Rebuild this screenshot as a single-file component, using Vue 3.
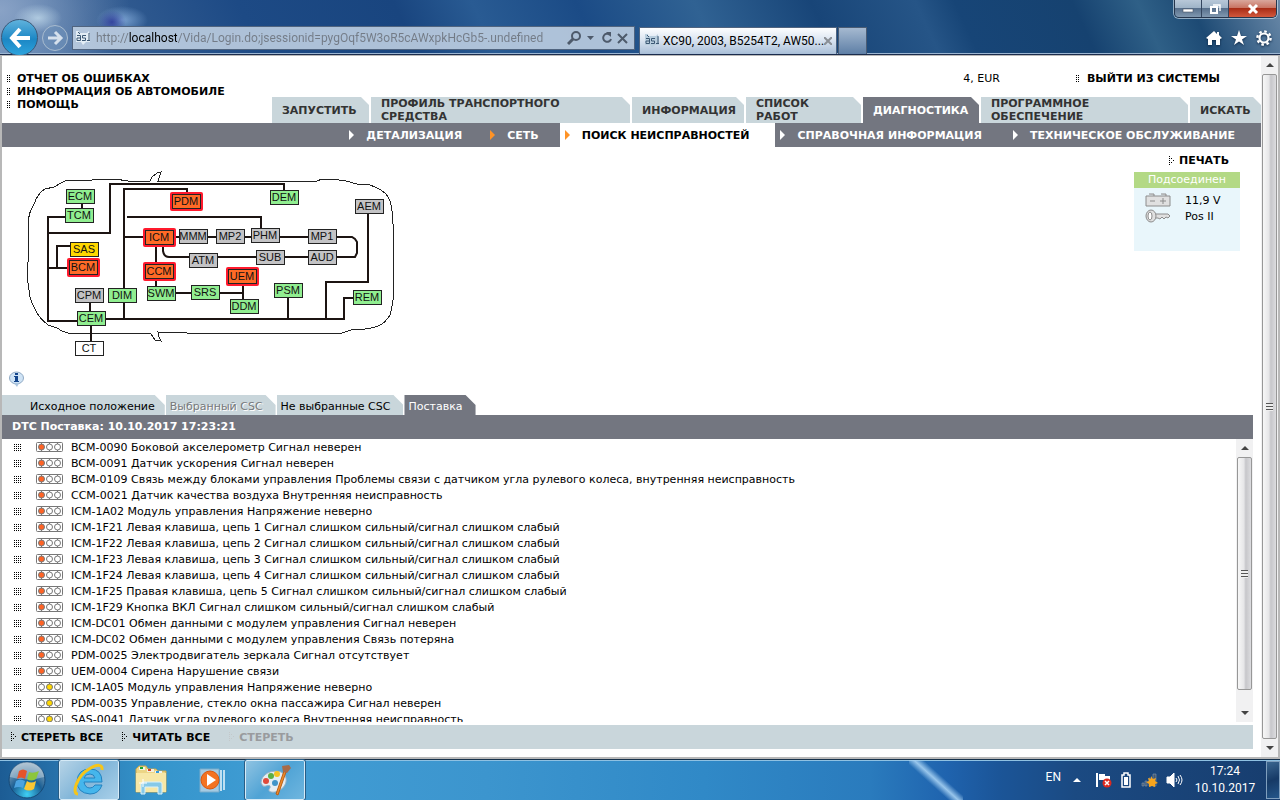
<template>
  <div class="desktop">
    <header class="chrome">
      <div class="titlebar">
        <div class="window-buttons">
          <button class="win" aria-label="Свернуть">
            <svg width="12" height="12"><rect x="1" y="6" width="10" height="3" fill="#fff" stroke="#4a5566" stroke-width="0.6" /></svg>
          </button>
          <button class="win" aria-label="Развернуть">
            <svg width="12" height="12" fill="none" stroke="#fff" stroke-width="2"><path d="M4 2H11V8" stroke-width="1.4" /><rect x="2" y="4" width="6" height="6" /></svg>
          </button>
          <button class="win close" aria-label="Закрыть">
            <svg width="12" height="12" stroke="#fff" stroke-width="3"><path d="M2 2L10 10M10 2L2 10" /></svg>
          </button>
        </div>
      </div>
      <div class="toolbar">
        <button class="back" aria-label="Назад">
          <svg width="24" height="24" fill="none" stroke="#fff" stroke-width="4"><path d="M3 12H22M12 3L4 12L12 21" /></svg>
        </button>
        <button class="forward" aria-label="Вперед">
          <svg width="18" height="18" fill="none" stroke="#d5e0ec" stroke-width="3"><path d="M2 9H15M9 3L15 9L9 15" /></svg>
        </button>
        <div class="address">
          <svg class="favicon" width="14" height="16" viewBox="0 0 14 16">
            <path :d="faviconBack" fill="#e3edf5" />
            <path :d="faviconMark" fill="none" stroke="#3c5874" />
          </svg>
          <input class="url" type="text" aria-label="Адрес" v-model="url" />
          <svg width="64" height="18" viewBox="0 0 64 18" fill="none" stroke="#4e5a6b" stroke-width="2">
            <circle cx="9" cy="7" r="4" />
            <path d="M6 10L1 15" stroke-width="3" />
            <path d="M20 7H27L23.500 11Z" fill="#4e5a6b" stroke="none" />
            <path d="M43 6A4 4 0 1 0 44 10" />
            <path d="M39 3H44V8Z" fill="#4e5a6b" stroke="none" />
            <path d="M51 5L60 14M60 5L51 14" />
          </svg>
        </div>
        <div class="browser-tab">
          <svg class="favicon" width="14" height="16" viewBox="0 0 14 16">
            <path :d="faviconBack" fill="#b9cede" />
            <path :d="faviconMark" fill="none" stroke="#3c5874" />
          </svg>
          <span>XC90, 2003, B5254T2, AW50...</span>
          <button class="tab-close" aria-label="Закрыть вкладку">
            <svg width="8" height="8" stroke="#8a8f96" stroke-width="2"><path d="M0 0L8 8M8 0L0 8" /></svg>
          </button>
        </div>
        <button class="new-tab" aria-label="Новая вкладка"></button>
        <div class="tools">
          <button aria-label="Домой">
            <svg width="16" height="16"><path d="M8 1L0 8L2 9V15H6V10H10V15H14V9L16 8L13 5V2H11V4Z" fill="#fff" /></svg>
          </button>
          <button aria-label="Избранное">
            <svg width="16" height="16"><path d="M8 0L10 6H16L11 9.500L13 15L8 11.500L3 15L5 9.500L0 6H6Z" fill="#fff" /></svg>
          </button>
          <button aria-label="Сервис">
            <svg width="16" height="16" fill="none" stroke="#fff"><circle cx="8" cy="8" r="4.500" stroke-width="2.200" /><circle cx="8" cy="8" r="6.600" stroke-width="2.400" stroke-dasharray="2.600 2.584" /></svg>
          </button>
        </div>
      </div>
    </header>

    <main class="viewport">
      <div class="page">
        <div class="page-header">
          <nav class="quick-links">
            <a v-for="link in quickLinks" :key="link" href="#">
              <svg class="dots" width="4" height="8"><path :d="dotPath(2, 4)" /></svg>{{ link }}
            </a>
          </nav>
          <div class="header-main">
            <div class="user-row">
              <span>4, EUR</span>
              <a href="#"><svg class="dots" width="4" height="8"><path :d="dotPath(2, 4)" /></svg>ВЫЙТИ ИЗ СИСТЕМЫ</a>
            </div>
            <nav class="main-tabs">
              <a v-for="tab in mainTabs" :key="tab" href="#" :class="{ active: tab === activeTab }" @click.prevent="activeTab = tab"><span>{{ tab }}</span></a>
            </nav>
          </div>
        </div>

        <nav class="sub-nav">
          <a v-for="item in subNav" :key="item.text" href="#" :class="item.cls">
            <svg width="5" height="10"><path d="M0 0L5 5L0 10Z" /></svg>{{ item.text }}
          </a>
        </nav>

        <section class="overview">
          <svg class="network" width="400" height="212" viewBox="2 147 400 212">
            <path class="body-line" :d="carOutline" />
            <path v-for="wire in wires" :key="wire" class="wire" :d="wire" />
            <g v-for="node in nodes" :key="node.name">
              <rect v-if="node.state === 'fault'" class="halo" :x="node.x - 1" :y="node.y - 1" width="31" height="17" rx="1" />
              <rect class="edge" :x="node.x" :y="node.y" width="29" height="15" />
              <rect :class="node.state" :x="node.x + 1" :y="node.y + 1" width="27" height="13" />
              <text :x="node.x + 14" :y="node.y + 11">{{ node.name }}</text>
            </g>
          </svg>
          <aside class="status">
            <a class="print" href="#"><svg class="dots" width="5" height="10"><path :d="arrowDots" /></svg>ПЕЧАТЬ</a>
            <div class="status-title">Подсоединен</div>
            <div class="status-body">
              <div class="status-row">
                <svg width="26" height="14" fill="#e0e0e0" stroke="#8c8c8c"><path d="M1 3H25V13H1ZM4 1H9V3M16 1H21V3" /><path d="M5 8H10M15 8H21M18 5V11" /></svg>
                <span>11,9 V</span>
              </div>
              <div class="status-row">
                <svg width="26" height="14" fill="#e0e0e0" stroke="#8c8c8c"><path d="M10 5H23L25 7L23 9L21 8L19 10L17 8L15 10L13 9H10" /><ellipse cx="6" cy="7" rx="5" ry="6" /><ellipse cx="5" cy="7" rx="2" ry="4" fill="#fff" /></svg>
                <span>Pos II</span>
              </div>
            </div>
          </aside>
        </section>

        <button class="info" aria-label="Информация">
          <svg width="17" height="17" viewBox="0 0 17 17">
            <ellipse cx="8.500" cy="7" rx="7" ry="6" fill="#cfe3f5" stroke="#8fa9c4" />
            <path d="M6 12L9 16L11 12Z" fill="#a9c4de" />
            <path d="M7 2H10V4H7ZM6 5H10V10H11V11H6V10H7V6H6Z" fill="#14458c" />
          </svg>
        </button>

        <nav class="csc-tabs">
          <button v-for="tab in cscTabs" :key="tab.text" :class="tab.cls" :disabled="tab.cls === 'disabled'">{{ tab.text }}</button>
        </nav>
        <section class="faults">
          <h2>DTC Поставка: 10.10.2017 17:23:21</h2>
          <div class="fault-area">
            <ul>
              <li v-for="fault in faults" :key="fault">
                <svg class="dots" width="8" height="7"><path :d="dotPath(4, 4)" /></svg>
                <svg class="lamp" width="27" height="10">
                  <rect x="0.500" y="0.500" width="26" height="9" rx="1" />
                  <path d="M5.500 0V10M13.500 0V10M21.500 0V10" />
                  <circle cx="5.500" cy="5" r="3" :class="{ red: !isYellow(fault) }" />
                  <circle cx="13.500" cy="5" r="3" :class="{ yellow: isYellow(fault) }" />
                  <circle cx="21.500" cy="5" r="3" />
                </svg>
                <span>{{ fault }}</span>
              </li>
            </ul>
            <div class="scrollbar list-scroll">
              <button aria-label="Вверх"><svg width="8" height="4"><path d="M0 4L4 0L8 4Z" /></svg></button>
              <div class="thumb"><i></i></div>
              <button aria-label="Вниз"><svg width="8" height="4"><path d="M0 0L4 4L8 0Z" /></svg></button>
            </div>
          </div>
          <div class="actions">
            <button><svg class="dots" width="5" height="10"><path :d="arrowDots" /></svg>СТЕРЕТЬ ВСЕ</button>
            <button><svg class="dots" width="5" height="10"><path :d="arrowDots" /></svg>ЧИТАТЬ ВСЕ</button>
            <button disabled><svg class="dots" width="5" height="10"><path :d="arrowDots" /></svg>СТЕРЕТЬ</button>
          </div>
        </section>
      </div>
      <div class="scrollbar page-scroll">
        <button aria-label="Вверх"><svg width="8" height="4"><path d="M0 4L4 0L8 4Z" /></svg></button>
        <div class="thumb"><i></i></div>
        <button aria-label="Вниз"><svg width="8" height="4"><path d="M0 0L4 4L8 0Z" /></svg></button>
      </div>
    </main>

    <footer class="taskbar">
      <button class="start" aria-label="Пуск">
        <svg width="40" height="40" viewBox="0 0 40 40">
          <defs>
            <radialGradient id="orb" cx="50%" cy="90%" r="85%">
              <stop offset="0" stop-color="#3fd0f5" />
              <stop offset="0.500" stop-color="#1a5f94" />
              <stop offset="1" stop-color="#8fa9bd" />
            </radialGradient>
          </defs>
          <circle cx="20" cy="20" r="18" fill="url(#orb)" stroke="#174a78" />
          <path d="M3 17A17 15 0 0 1 37 17Q20 22 3 17Z" fill="#dce8f0" opacity="0.400" />
          <path d="M12 11Q16 8 20 11L18 19Q14 16 10 19Z" fill="#e5542a" />
          <path d="M22 12Q26 14 32 11L29 19Q24 22 20 19Z" fill="#8cc63c" />
          <path d="M9 21Q13 18 18 21L16 28Q12 26 7 28Z" fill="#4ba3e0" />
          <path d="M20 21Q24 24 29 21L27 29Q22 32 17 29Z" fill="#fbc733" />
        </svg>
      </button>
      <button class="task current" aria-label="Internet Explorer">
        <svg width="34" height="34" viewBox="0 0 34 34" fill="none">
          <path d="M30 19H12Q13 25 18 25Q21 25 23 22H30Q27 31 18 31Q5 30 5 18Q6 6 18 6Q30 6 30 19ZM12 15H23Q22 11 18 11Q13 11 12 15Z" fill="#45b6ec" stroke="#2382c0" />
          <path d="M6 31C-1 31 5 13 17 6C25 1 31 1 30 7" stroke="#f7c518" stroke-width="3" />
        </svg>
      </button>
      <button class="task" aria-label="Проводник">
        <svg width="34" height="32" viewBox="0 0 34 32">
          <path d="M2 5L5 2H12L14 5H22L24 7H32V28H2Z" fill="#ecd585" stroke="#c7a750" />
          <path d="M5 3H11V6H5Z" fill="#eef3e8" /><path d="M6 3H9V5H6Z" fill="#18a333" /><path d="M13 5H20V8H13Z" fill="#f5efdf" /><path d="M14 5H17V7H14Z" fill="#d44526" /><path d="M21 7H28V10H21Z" fill="#edf3f7" /><path d="M22 7H25V9H22Z" fill="#3498db" />
          <path d="M2 9H32V28H2Z" fill="#f7e7a6" />
          <path d="M7 30V20Q8 18 10 18H26Q28 18 28 20V30H24V23H11V30Z" fill="#86c9e8" stroke="#d8f1fb" />
          <path d="M9 15V23M5 19H13" stroke="#fff" />
        </svg>
      </button>
      <button class="task" aria-label="Медиаплеер">
        <svg width="30" height="28" viewBox="0 0 30 28">
          <path d="M2 3H21V26H2Z" fill="#a4cbe3" stroke="#79abc9" />
          <path d="M23 4V25M26 4V24" stroke="#bfe0f2" stroke-width="2" />
          <circle cx="12" cy="14" r="9" fill="#f37321" stroke="#d9570e" />
          <path d="M9 8V20L18 14Z" fill="#fff" />
        </svg>
      </button>
      <button class="task open" aria-label="Paint">
        <svg width="34" height="34" viewBox="0 0 34 34">
          <path d="M3 20C3 11 14 6 23 9C31 13 29 23 22 27C16 31 8 29 12 25C13 20 8 24 5 23Z" fill="#e4edf3" stroke="#9bb3c5" />
          <circle cx="8" cy="18" r="3" fill="#e04a3a" /><circle cx="13" cy="13" r="3" fill="#5cae44" /><circle cx="19" cy="11" r="3" fill="#f5c223" /><circle cx="17" cy="20" r="3" fill="#3f94c9" />
          <path d="M28 9L20 32L18 31L26 8Z" fill="#f08b2c" stroke="#b85f16" />
          <path d="M25 9L24 3L31 2L33 5L29 10Z" fill="#a86b48" />
        </svg>
      </button>
      <div class="tray">
        <span class="lang">EN</span>
        <svg class="tray-up" width="8" height="4"><path d="M0 4L4 0L8 4Z" fill="#fff" /></svg>
        <svg width="16" height="16"><path d="M1 1V15" stroke="#fff" stroke-width="2" /><path d="M3 2H9V4H14V9H8V8H3Z" fill="#fff" /><circle cx="11" cy="11" r="4.500" fill="#dd2a20" /><path d="M9 9L13 13M13 9L9 13" stroke="#fff" stroke-width="1.500" /></svg>
        <svg width="12" height="16"><path d="M2 3H4V1H8V3H10V15H2Z" fill="none" stroke="#fff" stroke-width="1.500" /><path d="M4 5H8V13H4Z" fill="#fff" /></svg>
        <svg width="18" height="16"><path d="M2 11H4V14H2ZM5 9H7V14H5ZM9 6H11V14H9ZM13 2H16V14H13Z" fill="#42576f" stroke="#90a4b8" stroke-width="0.500" /><path d="M11 4L13 7L16 6L15 9L18 11L15 12L15 15L12 14L9 15L9 12L6 10L9 9L8 6L11 7Z" fill="#f7a51d" /></svg>
        <svg width="18" height="16" fill="none" stroke="#fff"><path d="M1 5H4L8 1V15L4 11H1Z" fill="#fff" /><path d="M10 6Q12 8 10 10M12 4Q15 8 12 12M14 3Q18 8 14 13" /></svg>
        <div class="clock"><span>17:24</span><span>10.10.2017</span></div>
        <button class="show-desktop" aria-label="Показать рабочий стол"></button>
      </div>
    </footer>
  </div>
</template>

<script setup>
import { ref } from 'vue'

const url = ref('http://localhost/Vida/Login.do;jsessionid=pygOqf5W3oR5cAWxpkHcGb5-.undefined')

const faviconBack = 'M0 1H3V3H11L13 1V4H14V12H10L7 15L5 12H0V4Z'
const faviconMark = 'M1 5.500H4.500V10.500H1V8H4M10 5.500H6.500V8H9.500V10.500H6M13 3V11M11 10.500H14M2 2L4 4'

const quickLinks = ['ОТЧЕТ ОБ ОШИБКАХ', 'ИНФОРМАЦИЯ ОБ АВТОМОБИЛЕ', 'ПОМОЩЬ']

const activeTab = ref('ДИАГНОСТИКА')
const mainTabs = [
  'ЗАПУСТИТЬ',
  'ПРОФИЛЬ ТРАНСПОРТНОГО СРЕДСТВА',
  'ИНФОРМАЦИЯ',
  'СПИСОК РАБОТ',
  'ДИАГНОСТИКА',
  'ПРОГРАММНОЕ ОБЕСПЕЧЕНИЕ',
  'ИСКАТЬ'
]

const subNav = [
  { text: 'ДЕТАЛИЗАЦИЯ', cls: '' },
  { text: 'СЕТЬ', cls: 'marked' },
  { text: 'ПОИСК НЕИСПРАВНОСТЕЙ', cls: 'marked active' },
  { text: 'СПРАВОЧНАЯ ИНФОРМАЦИЯ', cls: '' },
  { text: 'ТЕХНИЧЕСКОЕ ОБСЛУЖИВАНИЕ', cls: '' }
]

const cscTabs = [
  { text: 'Исходное положение', cls: 'first' },
  { text: 'Выбранный CSC', cls: 'disabled' },
  { text: 'Не выбранные CSC', cls: '' },
  { text: 'Поставка', cls: 'active' }
]

// control units: state is ok / off / warn / fault / none
const nodes = [
  { name: 'ECM', x: 66, y: 189, state: 'ok' },
  { name: 'TCM', x: 65, y: 208, state: 'ok' },
  { name: 'SAS', x: 70, y: 242, state: 'warn' },
  { name: 'BCM', x: 69, y: 260, state: 'fault' },
  { name: 'CPM', x: 75, y: 288, state: 'off' },
  { name: 'DIM', x: 108, y: 288, state: 'ok' },
  { name: 'CEM', x: 77, y: 311, state: 'ok' },
  { name: 'CT', x: 75, y: 341, state: 'none' },
  { name: 'PDM', x: 172, y: 194, state: 'fault' },
  { name: 'ICM', x: 145, y: 230, state: 'fault' },
  { name: 'CCM', x: 145, y: 264, state: 'fault' },
  { name: 'SWM', x: 147, y: 286, state: 'ok' },
  { name: 'SRS', x: 191, y: 285, state: 'ok' },
  { name: 'MMM', x: 179, y: 229, state: 'off' },
  { name: 'ATM', x: 189, y: 253, state: 'off' },
  { name: 'MP2', x: 216, y: 229, state: 'off' },
  { name: 'PHM', x: 251, y: 228, state: 'off' },
  { name: 'SUB', x: 256, y: 250, state: 'off' },
  { name: 'MP1', x: 308, y: 229, state: 'off' },
  { name: 'AUD', x: 308, y: 250, state: 'off' },
  { name: 'DEM', x: 270, y: 190, state: 'ok' },
  { name: 'AEM', x: 355, y: 199, state: 'off' },
  { name: 'UEM', x: 228, y: 269, state: 'fault' },
  { name: 'DDM', x: 230, y: 299, state: 'ok' },
  { name: 'PSM', x: 274, y: 283, state: 'ok' },
  { name: 'REM', x: 353, y: 290, state: 'ok' }
]

const wires = [
  'M82 204V208',
  'M65 217H48V321H77',
  'M48 233H110V184H284V190',
  'M124 319V189H187V194',
  'M127 217H261V228',
  'M124 237H352L355 239L357 242V253L355 257H189',
  'M156 245V286',
  'M163 245V251Q164 257 169 257H189',
  'M176 293H243M243 284V299',
  'M106 319H344V298H353',
  'M288 298V319',
  'M368 214V282H326V319',
  'M48 268H69M57 268V246H70',
  'M90 303V311M91 326V341'
]

const carOutline =
  'M28 229Q28 216 31 210Q35 203 36 199Q40 192 45 189L54 187L61 183L67 180H92L115 179L128 181H150L152 177L157 173L161 172L159 178L158 181H317L322 179H331L346 181L357 184L370 185Q381 189 386 194Q391 200 392 211L393 224V300Q392 309 390 315Q385 323 380 325Q374 328 365 329H354L342 333H187L158 332L159 337L161 341L155 340L151 334L127 333L119 334L107 333H68L62 331L57 328L48 325Q38 317 35 309Q29 298 29 290Q27 280 28 262Z'

const faults = [
  'BCM-0090 Боковой акселерометр Сигнал неверен',
  'BCM-0091 Датчик ускорения Сигнал неверен',
  'BCM-0109 Связь между блоками управления Проблемы связи с датчиком угла рулевого колеса, внутренняя неисправность',
  'CCM-0021 Датчик качества воздуха Внутренняя неисправность',
  'ICM-1A02 Модуль управления Напряжение неверно',
  'ICM-1F21 Левая клавиша, цепь 1 Сигнал слишком сильный/сигнал слишком слабый',
  'ICM-1F22 Левая клавиша, цепь 2 Сигнал слишком сильный/сигнал слишком слабый',
  'ICM-1F23 Левая клавиша, цепь 3 Сигнал слишком сильный/сигнал слишком слабый',
  'ICM-1F24 Левая клавиша, цепь 4 Сигнал слишком сильный/сигнал слишком слабый',
  'ICM-1F25 Правая клавиша, цепь 5 Сигнал слишком сильный/сигнал слишком слабый',
  'ICM-1F29 Кнопка ВКЛ Сигнал слишком сильный/сигнал слишком слабый',
  'ICM-DC01 Обмен данными с модулем управления Сигнал неверен',
  'ICM-DC02 Обмен данными с модулем управления Связь потеряна',
  'PDM-0025 Электродвигатель зеркала Сигнал отсутствует',
  'UEM-0004 Сирена Нарушение связи',
  'ICM-1A05 Модуль управления Напряжение неверно',
  'PDM-0035 Управление, стекло окна пассажира Сигнал неверен',
  'SAS-0041 Датчик угла рулевого колеса Внутренняя неисправность'
]

const yellowCodes = ['ICM-1A05', 'PDM-0035', 'SAS-0041']

function isYellow(fault) {
  return yellowCodes.includes(fault.slice(0, 8))
}

// grid of 1px dots with a 2px step
function dotPath(cols, rows) {
  let d = ''
  for (let r = 0; r < rows; r++) {
    for (let c = 0; c < cols; c++) {
      d += `M${c * 2} ${r * 2}h1v1h-1z`
    }
  }
  return d
}

const arrowDots = [[0, 0], [0, 2], [0, 4], [0, 6], [0, 8], [2, 2], [2, 6], [4, 4]]
  .map(([x, y]) => `M${x} ${y}h1v1h-1z`)
  .join('')
</script>

<style>
body {
  margin: 0;
  font-family: Verdana, "DejaVu Sans", sans-serif;
}
</style>

<style scoped>
.desktop {
  display: flex;
  flex-direction: column;
  height: 100vh;
  overflow: hidden;
  font-size: 11px;
  line-height: 13px;
  color: #000;
}
button {
  font: inherit;
  color: inherit;
  padding: 0;
  border: none;
  background: none;
}
a { color: inherit; text-decoration: none; }
svg { flex: none; }

/* browser chrome */
.chrome {
  flex: none;
  font-family: "Segoe UI", Roboto, sans-serif;
  background:
    radial-gradient(ellipse 24px 14px at 38px 18px, rgba(200,225,240,0.7), transparent),
    radial-gradient(ellipse 14px 12px at 112px 22px, rgba(40,50,150,0.8), transparent),
    radial-gradient(ellipse 26px 14px at 122px 20px, rgba(150,190,235,0.7), transparent),
    radial-gradient(ellipse 130px 90px at 0 10px, rgba(150,172,205,0.8), transparent),
    linear-gradient(65deg, #5f84b0 0, #365f93 8%, #1d4a85 20%, #19457f 32%, #295b93 38%, #1b4b86 46%, #306293 55%, #184578 64%, #265587 72%, #174577 75%, #164270 84%, #2f6087 89%, #1d4a74 93%, #6b8aa9 100%);
  border-bottom: 1px solid #1b2c4d;
  box-shadow: inset 0 -1px #9cb6d2;
}
.titlebar { display: flex; justify-content: flex-end; height: 20px; padding-right: 3px; }
.window-buttons {
  display: flex;
  height: 17px;
  border: 1px solid #26364d;
  border-top: none;
  border-radius: 0 0 5px 5px;
  overflow: hidden;
  box-shadow: 0 0 0 1px rgba(220,235,245,0.6);
}
.win {
  display: flex;
  align-items: center;
  justify-content: center;
  width: 27px;
  border-right: 1px solid #33455e;
  background: linear-gradient(#b8c8d8 0, #9fb4c8 45%, #58708c 50%, #8098b0 100%);
}
.win.close {
  width: 47px;
  border-right: none;
  background: linear-gradient(#d9a79c 0, #c97564 45%, #a92d17 50%, #d2583c 100%);
}
.toolbar { display: flex; height: 34px; align-items: flex-end; }
.back {
  display: flex;
  align-items: center;
  justify-content: center;
  width: 37px;
  height: 37px;
  margin: 0 4px -2px 1px;
  border: 1px solid #3c5877;
  border-radius: 50%;
  background: linear-gradient(#5fb2dc, #1c87c5 55%, #2da3dc);
}
.forward {
  display: flex;
  align-items: center;
  justify-content: center;
  width: 26px;
  height: 26px;
  margin: 0 4px 3px 0;
  border: 1px solid #a9bccf;
  border-radius: 50%;
  background: rgba(110,145,185,0.6);
}
.address {
  display: flex;
  flex: 1 1 0;
  align-items: center;
  max-width: 563px;
  height: 24px;
  margin: 0 4px 4px 0;
  padding: 0 3px;
  box-sizing: border-box;
  border: 1px solid #50647f;
  background: rgba(190,206,225,0.9);
}
.favicon { margin-right: 6px; }
.url {
  flex: 1;
  min-width: 0;
  height: 22px;
  padding: 0;
  border: none;
  outline: none;
  font-family: inherit;
  font-size: 12px;
  color: transparent;
  background: linear-gradient(90deg, #737b86 33px, #000 33px, #000 81px, #737b86 81px);
  -webkit-background-clip: text;
  background-clip: text;
}
.browser-tab {
  display: flex;
  align-items: center;
  width: 198px;
  height: 27px;
  padding: 0 5px;
  box-sizing: border-box;
  border: 1px solid #50647f;
  border-bottom: none;
  background: linear-gradient(#fdfeff, #dbe5f1 45%, #a9bfd8);
  font-size: 12px;
  white-space: nowrap;
}
.browser-tab .favicon { margin-right: 4px; }
.browser-tab span { flex: 1; }
.tab-close { display: flex; }
.new-tab {
  width: 29px;
  height: 27px;
  margin-left: 1px;
  border: 1px solid #4a5c74;
  border-bottom: none;
  background: linear-gradient(#a5b9d0, #5e7fa6);
}
.tools { display: flex; gap: 9px; margin: 0 8px 8px auto; }
.tools button { display: flex; filter: drop-shadow(0 1px 1px #102a48); }

/* page */
.viewport {
  display: flex;
  flex: 1;
  min-height: 0;
  border: 2px solid #b8b8b8;
  border-top-width: 1px;
  background: #fff;
}
.page { display: flex; flex: 1; flex-direction: column; min-width: 0; }
.page-header { display: flex; justify-content: space-between; }
.quick-links { padding: 16px 0 0 5px; font-weight: bold; }
.quick-links a { display: flex; align-items: center; white-space: nowrap; }
.quick-links .dots { margin-right: 6px; }
.dots { fill: #000; shape-rendering: crispEdges; }
.header-main { display: flex; flex-direction: column; }
.user-row { display: flex; justify-content: flex-end; padding: 16px 41px 12px 0; }
.user-row a { display: flex; align-items: center; margin-left: 76px; font-weight: bold; }
.user-row a .dots { margin-right: 7px; }
.main-tabs {
  display: grid;
  grid-template-columns: 97px 259px 112px 115px 116px 207px 71px;
  gap: 2px;
}
.main-tabs a {
  display: flex;
  align-items: center;
  height: 26px;
  padding: 0 0 0 10px;
  background: #c9d6db;
  color: #333;
  font-weight: bold;
  clip-path: polygon(0 0, calc(100% - 8px) 0, 100% 8px, 100% 100%, 0 100%);
}
.main-tabs a span { padding-right: 10px; }
.main-tabs a.active { background: #737680; color: #fff; }
.sub-nav {
  display: flex;
  flex: none;
  justify-content: flex-end;
  height: 24px;
  background: #737680;
  color: #fff;
  font-weight: bold;
}
.sub-nav a { display: flex; align-items: center; padding: 0 26px 0 5px; white-space: nowrap; }
.sub-nav a:nth-child(2) { padding-right: 21px; padding-left: 2px; }
.sub-nav svg { margin-right: 12px; fill: #fff; }
.sub-nav .marked svg { fill: #ff9326; }
.sub-nav .active { background: #fff; color: #000; }
.overview { display: flex; flex: none; justify-content: space-between; }
.network { font-family: Arial, "Liberation Sans", sans-serif; font-size: 11px; }
.body-line { fill: none; stroke: #222; stroke-width: 1; shape-rendering: crispEdges; }
.wire { fill: none; stroke: #1c1412; stroke-width: 2; }
.network text { text-anchor: middle; fill: #111; }
.halo { fill: #ff1a2d; stroke: #ff1a2d; stroke-width: 2; }
.edge { fill: #222; }
.ok { fill: #90ee90; }
.off { fill: #c3c3c5; }
.warn { fill: #ffd700; }
.fault { fill: #ff6a26; }
.none { fill: #fff; }
.status { width: 106px; margin-right: 21px; padding-top: 7px; }
.print { display: flex; align-items: center; margin-left: 35px; font-weight: bold; }
.print .dots { margin-right: 5px; }
.status-title {
  margin-top: 5px;
  height: 16px;
  line-height: 16px;
  background: #b3d985;
  color: #fff;
  text-align: center;
}
.status-body { height: 59px; padding: 4px 0 0 11px; background: #e9f6fb; }
.status-row { display: flex; align-items: center; gap: 14px; height: 16px; }
.info { display: flex; flex: none; margin: 12px 0 7px 6px; }
.csc-tabs { display: flex; flex: none; gap: 1px; }
.csc-tabs button {
  height: 20px;
  padding: 2px 13px 0 4px;
  background: #c9d6db;
  clip-path: polygon(0 0, calc(100% - 10px) 0, 100% 10px, 100% 100%, 0 100%);
}
.csc-tabs .first { padding-left: 28px; padding-right: 10px; }
.csc-tabs .disabled { color: #77797b; text-shadow: 1px 1px #fff; }
.csc-tabs .active { background: #737680; color: #fff; }
.faults { display: flex; flex: 1; flex-direction: column; min-height: 0; margin: 0 8px 8px 0; }
.faults h2 {
  flex: none;
  margin: 0;
  padding-left: 10px;
  font-size: 11px;
  line-height: 24px;
  background: #737680;
  color: #fff;
}
.fault-area { display: flex; flex: 1; min-height: 0; margin-bottom: 3px; }
.fault-area ul { flex: 1; margin: 0; padding: 0 0 0 12px; overflow: hidden; list-style: none; }
.fault-area li { display: flex; align-items: center; height: 16px; white-space: nowrap; }
.lamp { margin: 0 8px 0 14px; fill: #fff; stroke: #777; }
.lamp .red { fill: #ff6426; }
.lamp .yellow { fill: #ffd700; }
.actions {
  display: flex;
  flex: none;
  gap: 19px;
  height: 24px;
  padding-left: 9px;
  background: #c9d6db;
  font-weight: bold;
}
.actions button { display: flex; align-items: center; }
.actions .dots { margin-right: 5px; }
.actions button:disabled { color: #999b9e; }
.actions button:disabled .dots { fill: #c4c8ca; }

.scrollbar { display: flex; flex: none; flex-direction: column; width: 17px; background: #f1f1f2; }
.scrollbar button { display: flex; align-items: center; justify-content: center; height: 18px; }
.scrollbar button svg { fill: #444; }
.thumb {
  display: flex;
  flex: 1;
  align-items: center;
  justify-content: center;
  margin: 0 1px;
  border: 1px solid #979797;
  border-radius: 2px;
  background: linear-gradient(90deg, #f7f7f7, #e6e6e8 45%, #c6c6ca 60%, #dcdcdf);
}
.thumb i {
  width: 7px;
  height: 8px;
  background: repeating-linear-gradient(#555 0, #555 1px, #eee 1px, #eee 3px);
}
.list-scroll .thumb { margin-bottom: 14px; }

/* taskbar */
.taskbar {
  display: flex;
  flex: none;
  align-items: center;
  height: 40px;
  border-top: 1px solid #16314c;
  box-shadow: inset 0 1px #8fc1e2;
  background: linear-gradient(90deg, #1c5c94 0, #2874ad 5%, #3595cc 12%, #419dd4 22%, #3c95ce 38%, #3089c7 55%, #2a7bbd 68%, #1f63ae 74%, #1b5598 78%, #1b4a82 84%, #173d6e 100%);
  font-family: "Segoe UI", Roboto, sans-serif;
  font-size: 12px;
  color: #fff;
  position: relative;
}
.taskbar::before {
  content: "";
  position: absolute;
  top: 0;
  bottom: 0;
  left: 71%;
  width: 54px;
  background: linear-gradient(42deg, transparent 40%, rgba(165,208,242,0.9) 50%, transparent 60%);
}
.start { display: flex; margin: 0 12px 0 7px; }
.task {
  display: flex;
  align-items: center;
  justify-content: center;
  width: 60px;
  height: 40px;
  margin-right: 2px;
  box-sizing: border-box;
}
.task.current, .task.open {
  border: 1px solid #d5eaf7;
  border-radius: 2px;
  outline: 1px solid #285d86;
  background: linear-gradient(135deg, #b6d3e6, #82b6d9 50%, #a9d0e9);
}
.task.open { background: linear-gradient(135deg, #8fc3e2, #4fa3d5 50%, #6fb6df); }
.tray { display: flex; align-items: center; gap: 8px; height: 40px; margin-left: auto; }
.lang { margin: 0 4px 5px 0; }
.tray-up { margin-right: 7px; }
.clock {
  display: flex;
  flex-direction: column;
  align-items: center;
  width: 66px;
  line-height: 17px;
}
.show-desktop {
  width: 14px;
  height: 38px;
  border: 1px solid #7f9fbe;
  background: linear-gradient(160deg, #3b6690, #163a66 50%, #24568a);
}
</style>
